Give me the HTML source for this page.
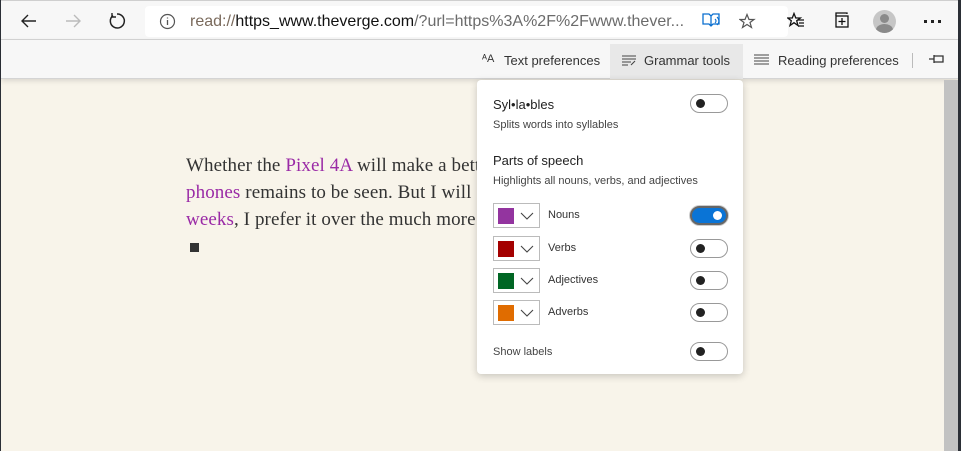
<!DOCTYPE html>
<html><head><meta charset="utf-8"><style>
*{margin:0;padding:0;box-sizing:border-box}
body{width:961px;height:451px;overflow:hidden;background:#2b2f36;font-family:"Liberation Sans",sans-serif;position:relative}
.win{position:absolute;left:1px;top:0;width:957px;height:451px;background:#f8f4ea}
.top{position:absolute;left:0;top:0;width:957px;height:40px;background:#f7f7f7;border-top:1px solid #cfcfcf;border-bottom:1px solid #d6d6d6}
.addr{position:absolute;left:144px;top:5px;width:643px;height:31px;background:#fff;border-radius:4px}
.url{position:absolute;left:45px;top:7px;font-size:16px;color:#7a6a5c;white-space:nowrap}
.url b{font-weight:normal;color:#111}
.url i{font-style:normal;color:#6b6b6b}
.bar2{position:absolute;left:0;top:40px;width:957px;height:39px;background:#f7f7f7;border-bottom:1px solid #d4d4d4;box-shadow:0 2px 5px rgba(0,0,0,.12)}
.bi{position:absolute;top:13px;font-size:13px;color:#333}
.gt{position:absolute;left:609px;top:4px;width:133px;height:35px;background:#e8e8e8}
.scroll{position:absolute;left:943px;top:80px;width:14px;height:371px;background:#c2c2c2}
.text{position:absolute;left:185px;top:152px;font-family:"Liberation Serif",serif;font-size:19px;letter-spacing:0.1px;line-height:27px;color:#333;white-space:nowrap}
.p{color:#9a2aa6}
.panel{position:absolute;left:476px;top:80px;width:266px;height:294px;background:#fff;border-radius:4px;box-shadow:0 2px 8px rgba(0,0,0,.2);color:#333}
.h{position:absolute;left:16px;font-size:13px;color:#222}
.s{position:absolute;left:16px;font-size:11px;color:#444}
.tg{position:absolute;left:213px;width:38px;height:19px;border:1px solid #999;border-radius:10px}
.tg:after{content:"";position:absolute;left:5px;top:4px;width:9px;height:9px;border-radius:50%;background:#222}
.tg.on{background:#0a74d6;border:2px solid #666;box-shadow:0 0 0 1px #ccc}
.tg.on:after{left:21px;top:3px;background:#fff}
.dd{position:absolute;left:16px;width:47px;height:25px;border:1px solid #bbb}
.dd span{position:absolute;left:4px;top:4px;width:16px;height:16px}
.dd svg{position:absolute;left:26px;top:8px}
.lb{position:absolute;left:71px;font-size:11px;color:#333}
</style></head><body>
<div class="win">
<div class="top">
<svg style="position:absolute;left:18px;top:10px" width="20" height="20" viewBox="0 0 20 20"><path d="M17 10H3M9 4l-6 6 6 6" fill="none" stroke="#222" stroke-width="1.4"/></svg>
<svg style="position:absolute;left:62px;top:10px" width="20" height="20" viewBox="0 0 20 20"><path d="M3 10h14M11 4l6 6-6 6" fill="none" stroke="#bbb" stroke-width="1.4"/></svg>
<svg style="position:absolute;left:106px;top:10px" width="20" height="20" viewBox="0 0 20 20"><path d="M6 4.5A7 7 0 1 0 10 3" fill="none" stroke="#222" stroke-width="1.5"/><path d="M5 2v4h4" fill="none" stroke="#222" stroke-width="1.4"/></svg>
<div class="addr">
<svg style="position:absolute;left:14px;top:7px" width="17" height="17" viewBox="0 0 17 17"><circle cx="8.5" cy="8.5" r="7" fill="none" stroke="#555" stroke-width="1.2"/><path d="M8.5 7v5M8.5 4.5v1" stroke="#555" stroke-width="1.3"/></svg>
<div class="url">read://<b>https_www.theverge.com</b><i>/?url=https%3A%2F%2Fwww.thever...</i></div>
<svg style="position:absolute;left:557px;top:6px" width="20" height="18" viewBox="0 0 20 18"><path d="M1 2h6l2 2 2-2h6v10h-6l-2 2-2-2H1z M9 4v10" fill="none" stroke="#0a6fd0" stroke-width="1.3"/><path d="M13 7q2 2 0 4M15 5q4 4 0 8" fill="none" stroke="#0a6fd0" stroke-width="1.1"/></svg>
<svg style="position:absolute;left:594px;top:7px" width="18" height="18" viewBox="0 0 18 18"><path d="M8 1.5l2 5h5l-4 3 1.5 5L8 11.5 3.5 14.5 5 9.5 1 6.5h5z" fill="none" stroke="#555" stroke-width="1.2"/></svg>
</div>
<svg style="position:absolute;left:786px;top:11px" width="18" height="18" viewBox="0 0 18 18"><path d="M7 1.5l1.8 4.5h4.5L9.7 8.8l1.3 4.7L7 10.7 3 13.5l1.3-4.7L.8 6h4.5z" fill="none" stroke="#111" stroke-width="1.3"/><path d="M11 8h6M12 11h5M11 14h6" stroke="#111" stroke-width="1.3"/></svg>
<svg style="position:absolute;left:832px;top:10px" width="18" height="18" viewBox="0 0 18 18"><path d="M3 5V2h11v1" fill="none" stroke="#111" stroke-width="1.3"/><rect x="3" y="5" width="12" height="11" fill="none" stroke="#111" stroke-width="1.3"/><path d="M9 7v7M5.5 10.5h7" stroke="#111" stroke-width="1.3"/></svg>
<div style="position:absolute;left:872px;top:9px;width:23px;height:23px;border-radius:50%;background:#c6c6c6;overflow:hidden"><div style="position:absolute;left:7px;top:4px;width:9px;height:9px;border-radius:50%;background:#8a8a8a"></div><div style="position:absolute;left:3px;top:14px;width:17px;height:12px;border-radius:50%;background:#8a8a8a"></div></div>
<div style="position:absolute;left:923px;top:19px;width:3px;height:3px;background:#222;box-shadow:7px 0 #222,14px 0 #222"></div>
</div>
<div class="bar2">
<div class="gt"></div>
<div class="bi" style="left:481px;top:13px;font-size:11px">ᴬA</div>
<div class="bi" style="left:503px">Text preferences</div>
<svg style="position:absolute;left:620px;top:15px" width="16" height="12" viewBox="0 0 16 12"><path d="M1 1h14M1 4h14M1 7h9M1 10h6M10 10l4-4" stroke="#444" stroke-width="1.1"/></svg>
<div class="bi" style="left:643px">Grammar tools</div>
<svg style="position:absolute;left:753px;top:14px" width="16" height="12" viewBox="0 0 16 12"><path d="M0 1h15M0 4h15M0 7h15M0 10h15" stroke="#444" stroke-width="1.1"/></svg>
<div class="bi" style="left:777px">Reading preferences</div>
<div style="position:absolute;left:911px;top:13px;width:1px;height:15px;background:#bbb"></div>
<svg style="position:absolute;left:928px;top:14px" width="16" height="10" viewBox="0 0 16 10"><path d="M0 5h5M5 1v8M5 2h9v6H5" fill="none" stroke="#333" stroke-width="1.3"/></svg>
</div>
<div class="text">Whether the <span class="p">Pixel 4A</span> will make a better phone than other<br><span class="p">phones</span> remains to be seen. But I will say that after a few<br><span class="p">weeks</span>, I prefer it over the much more expensive phones.<br><span style="display:inline-block;width:9px;height:9px;background:#333;margin-left:4px"></span></div>
<div class="scroll"></div>
<div class="panel">
<div class="h" style="top:17px">Syl•la•bles</div>
<div class="s" style="top:39px">Splits words into syllables</div>
<div class="tg" style="top:14px"></div>
<div class="h" style="top:73px">Parts of speech</div>
<div class="s" style="top:95px">Highlights all nouns, verbs, and adjectives</div>
<div class="dd" style="top:123px"><span style="background:#93349f"></span><svg width="14" height="8"><path d="M1 1l6 6 6-6" fill="none" stroke="#444" stroke-width="1.1"/></svg></div>
<div class="lb" style="top:129px">Nouns</div><div class="tg on" style="top:126px"></div>
<div class="dd" style="top:156px"><span style="background:#a40000"></span><svg width="14" height="8"><path d="M1 1l6 6 6-6" fill="none" stroke="#444" stroke-width="1.1"/></svg></div>
<div class="lb" style="top:162px">Verbs</div><div class="tg" style="top:159px"></div>
<div class="dd" style="top:188px"><span style="background:#006624"></span><svg width="14" height="8"><path d="M1 1l6 6 6-6" fill="none" stroke="#444" stroke-width="1.1"/></svg></div>
<div class="lb" style="top:194px">Adjectives</div><div class="tg" style="top:191px"></div>
<div class="dd" style="top:220px"><span style="background:#e06c00"></span><svg width="14" height="8"><path d="M1 1l6 6 6-6" fill="none" stroke="#444" stroke-width="1.1"/></svg></div>
<div class="lb" style="top:226px">Adverbs</div><div class="tg" style="top:223px"></div>
<div class="s" style="top:266px">Show labels</div>
<div class="tg" style="top:262px"></div>
</div>
</div>
</body></html>
